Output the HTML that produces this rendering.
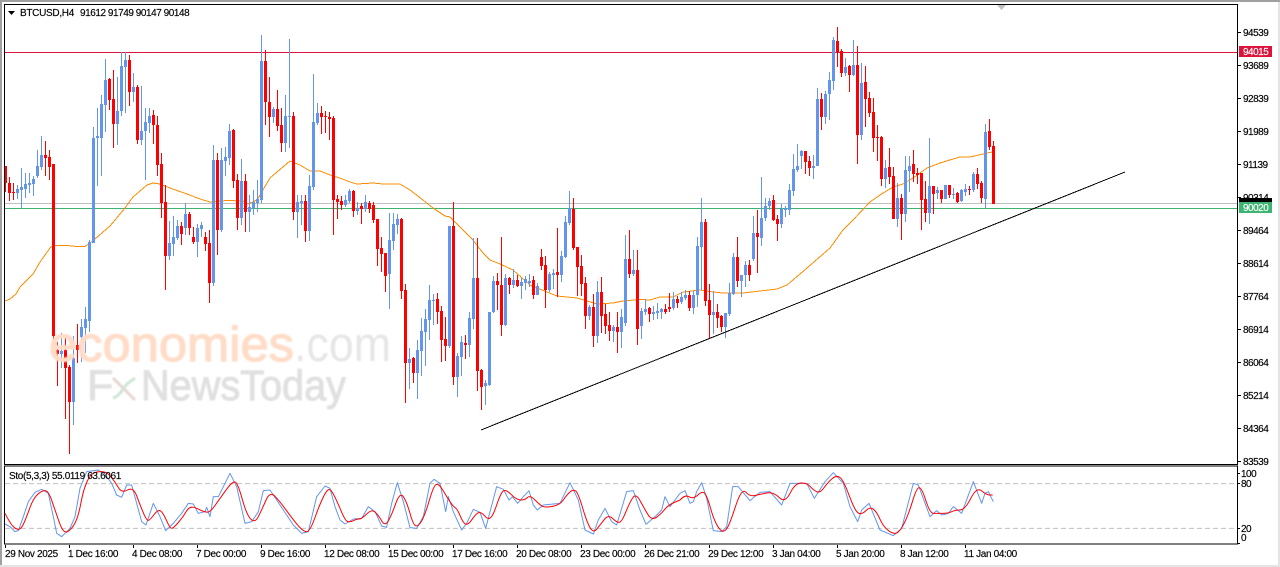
<!DOCTYPE html>
<html><head><meta charset="utf-8"><title>BTCUSD,H4</title>
<style>
html,body{margin:0;padding:0;background:#fff;width:1280px;height:567px;overflow:hidden}
svg{display:block}
text{font-family:"Liberation Sans",sans-serif;font-size:10px;fill:#000;letter-spacing:-.5px;stroke:#000;stroke-width:.15px}
.d text,text.d{letter-spacing:-.35px}
.w{stroke:none;letter-spacing:0}
.c{shape-rendering:crispEdges}
</style></head><body>
<svg width="1280" height="567" viewBox="0 0 1280 567" xmlns="http://www.w3.org/2000/svg">
<defs><filter id="bl" x="-5%" y="-5%" width="110%" height="110%"><feGaussianBlur stdDeviation=".7"/></filter></defs>
<rect width="1280" height="567" fill="#fff"/>
<g class="c">
<rect x="0" y="0" width="1280" height="2" fill="#a0a0a0"/>
<rect x="0" y="0" width="2" height="567" fill="#a0a0a0"/>
<rect x="0" y="565" width="1280" height="2" fill="#e4e4e4"/>
<rect x="1278" y="0" width="2" height="567" fill="#e4e4e4"/>
<rect x="1278" y="0" width="2" height="2" fill="#a0a0a0"/>
<rect x="1239" y="46" width="33" height="11" fill="#dc143c"/>
<rect x="4" y="52" width="1233" height="1" fill="#dc143c"/>
<rect x="4" y="203" width="1233" height="1" fill="#c0c0c0"/>
<rect x="4" y="208" width="1233" height="1" fill="#3cb371"/>
</g>
<polyline class="c" fill="none" stroke="#ff8c00" stroke-width="1" points="5,301 10,299 16,294 20,287 25,282 33,274 40,262 45,255 50,248 53,245.500 67,245.500 77,246.500 85,246.500 90,243 95,239 110,226 115,220 125,208 133,197 147,185 153,183 160,184 170,188 187,194 200,199 210,202 227,200.500 243,201 248,204 257,200 270,178 290,161 300,165 310,171 320,171 333,176 340,178 350,182 357,184 373,183 383,184 400,184 410,190 423,200 433,208 445,216 450,217 460,227 473,240 483,253 490,260 500,264 513,270 530,285 547,292 557,296 577,298 597,304 613,303 623,301 640,299.500 650,300 660,297 673,297 683,292 700,290 713,292 723,293 743,293 760,291 777,289 787,285 807,268 830,248 843,230 853,220 870,202 880,195 893,187 903,184 913,178 927,168 940,163 960,157 970,157 983,154 992,152"/>
<path id="wr" class="c" fill="none" stroke="#f00" stroke-width="1"/>
<path id="wb" class="c" fill="none" stroke="#6495ed" stroke-width="1"/>
<path id="br" class="c" fill="#f00"/>
<path id="bb" class="c" fill="#6495ed"/>
<line x1="481" y1="430" x2="1125" y2="172" stroke="#000" stroke-width="1" class="c"/>
<polygon points="997,5 1006,5 1001.500,10" fill="#c0c0c0"/>
<polygon points="8,11 15,11 11.500,15" fill="#000"/>
<rect class="c" x="4" y="4" width="1233" height="460" fill="none" stroke="#000" stroke-width="1" transform="translate(.5 .5)"/>
<rect class="c" x="4" y="466" width="1233" height="78" fill="none" stroke="#000" stroke-width="1" transform="translate(.5 0)"/>
<g transform="translate(0 460) scale(.33333)" fill="none" stroke-width="3" stroke-linejoin="round">
<polyline stroke="#c0c0c0" stroke-dasharray="15 9" points="15,71 3711,71"/>
<polyline stroke="#c0c0c0" stroke-dasharray="15 9" points="15,205 3711,205"/>
<g transform="translate(0 0)">
<polyline stroke="#6495ed" points="15,192 30,200 45,215 55,212 70,170 85,125 105,97 125,88 145,100 160,170 170,220 185,230 210,205 225,170 240,85 260,35 295,30 320,50 335,70 350,105 365,112 380,75 395,75 410,130 425,185 438,195 460,130 480,170 497,212 520,190 545,160 565,130 580,132 595,160 615,155 620,142 630,170 640,110 655,110 690,40 710,80 735,190 755,185 775,155 790,92 810,90 830,120 850,150 880,195 905,220 925,215 950,110 975,78 990,85 1005,140 1020,180"/>
<polyline class="s" stroke="#f00" points="15,160 30,190 50,210 65,205 80,170 100,115 125,92 145,92 165,150 190,222 215,208 235,170 250,90 270,45 290,35 320,35 345,65 365,100 400,80 420,135 440,182 450,180 475,147 490,160 510,205 520,205 550,170 570,135 610,155 630,158 660,115 700,60 715,75 740,165 765,190 785,150 810,93 840,125 880,180 910,215 930,215 960,130 985,82 1000,100 1020,145"/>
</g>
<g transform="translate(1020 0)">
<polyline stroke="#6495ed" points="0,180 15,192 40,177 65,175 85,140 105,155 125,198 140,202 155,130 172,68 190,125 210,203 230,205 250,170 270,70 282,58 300,70 317,155 325,110 340,155 365,210 380,190 400,148 420,157 437,205 470,80 490,88 507,120 517,110 533,130 550,110 567,92 580,135 592,150 610,135 660,130 690,68 715,120 735,210 760,222 775,180 795,145 815,185 830,195 860,95 880,92 900,150 918,193 945,170 965,150 975,110 990,140 1020,100"/>
<polyline class="s" stroke="#f00" points="0,145 15,182 30,187 50,177 65,177 95,147 115,165 135,200 155,165 180,95 200,125 220,195 235,200 255,165 280,80 295,68 320,110 340,140 352,147 370,190 385,195 410,158 425,157 445,180 460,165 480,105 495,85 530,120 555,120 570,105 600,135 615,143 660,135 680,105 700,87 715,100 740,185 760,220 780,195 805,163 830,187 845,187 870,125 888,100 910,140 935,183 965,160 985,135 1020,120"/>
</g>
<g transform="translate(2040 0)">
<polyline stroke="#6495ed" points="0,100 15,92 30,130 40,125 50,95 65,68 80,115 100,212 125,215 140,200 158,80 175,80 210,122 240,97 270,95 305,135 330,70 380,70 403,115 435,65 460,38 490,70 510,140 533,185 545,150 567,130 600,210 640,227 665,205 700,70 715,75 750,170 770,152 785,165 805,160 820,140 845,160 880,65 905,130 915,100 925,95 940,125"/>
<polyline class="s" stroke="#f00" points="0,120 15,103 40,118 70,90 85,120 100,175 120,212 135,215 150,190 185,83 210,110 240,103 280,95 315,130 345,70 380,68 400,90 420,100 445,65 470,45 490,60 520,140 535,162 550,160 570,140 590,155 610,200 640,223 660,215 685,165 710,83 725,83 750,160 770,160 805,160 825,150 855,150 890,80 920,105 938,105"/>
</g>
</g>
<g class="c" stroke="#000" stroke-width="1">
<path d="M1238 32.500h3M1238 65.500h3M1238 98.500h3M1238 131.500h3M1238 164.500h3M1238 197.500h3M1238 230.500h3M1238 263.500h3M1238 296.500h3M1238 329.500h3M1238 362.500h3M1238 395.500h3M1238 428.500h3M1238 461.500h3M1238 473.500h2M1238 483.500h2M1238 528.500h2M1238 543.500h2"/>
<path d="M5.500 545v3M69.500 545v3M133.500 545v3M197.500 545v3M261.500 545v3M325.500 545v3M389.500 545v3M453.500 545v3M517.500 545v3M581.500 545v3M645.500 545v3M709.500 545v3M773.500 545v3M837.500 545v3M901.500 545v3M965.500 545v3"/>
</g>
<text x="20" y="16" style="letter-spacing:-.3px">BTCUSD,H4</text>
<text x="80" y="16" style="letter-spacing:-.45px">91612 91749 90147 90148</text>
<text x="9" y="479" class="d">Sto(5,3,3) 55.0119 63.6061</text>
<g>
<text x="1243" y="36">94539</text>
<text x="1243" y="69">93689</text>
<text x="1243" y="102">92839</text>
<text x="1243" y="135">91989</text>
<text x="1243" y="168">91139</text>
<text x="1243" y="201">90314</text>
<text x="1243" y="234">89464</text>
<text x="1243" y="267">88614</text>
<text x="1243" y="300">87764</text>
<text x="1243" y="333">86914</text>
<text x="1243" y="366">86064</text>
<text x="1243" y="399">85214</text>
<text x="1243" y="432">84364</text>
<text x="1243" y="465">83539</text>
<text x="1241" y="477">100</text>
<text x="1241" y="487">80</text>
<text x="1241" y="532">20</text>
<text x="1241" y="541">0</text>
</g>
<rect class="c" x="1239" y="198" width="33" height="4" fill="#000"/>
<rect class="c" x="1239" y="202" width="33" height="11" fill="#3cb371"/>
<text x="1243" y="55" style="fill:#fff;stroke:#fff">94015</text>
<text x="1243" y="211" style="fill:#fff;stroke:#fff">90020</text>
<g class="d">
<text x="5" y="557">29 Nov 2025</text>
<text x="68" y="557">1 Dec 16:00</text>
<text x="132" y="557">4 Dec 08:00</text>
<text x="196" y="557">7 Dec 00:00</text>
<text x="260" y="557">9 Dec 16:00</text>
<text x="324" y="557">12 Dec 08:00</text>
<text x="388" y="557">15 Dec 00:00</text>
<text x="452" y="557">17 Dec 16:00</text>
<text x="516" y="557">20 Dec 08:00</text>
<text x="580" y="557">23 Dec 00:00</text>
<text x="644" y="557">26 Dec 21:00</text>
<text x="708" y="557">29 Dec 12:00</text>
<text x="772" y="557">3 Jan 04:00</text>
<text x="836" y="557">5 Jan 20:00</text>
<text x="900" y="557">8 Jan 12:00</text>
<text x="964" y="557">11 Jan 04:00</text>
</g>
<g filter="url(#bl)">
<text class="w" x="49" y="361" textLength="245" lengthAdjust="spacingAndGlyphs" style="font-size:49px;fill:#ffdcc7;stroke:#ffdcc7;stroke-width:1.2px">economies</text>
<text class="w" x="294" y="361" textLength="97" lengthAdjust="spacingAndGlyphs" style="font-size:49px;fill:#e6e6e6;stroke:none">.com</text>
<text class="w" x="87" y="400" style="font-size:43px;fill:#e0e0e0;stroke:#e0e0e0;stroke-width:1px">F</text>
<text class="w" x="141" y="400" textLength="205" lengthAdjust="spacingAndGlyphs" style="font-size:43px;fill:#e0e0e0;stroke:#e0e0e0;stroke-width:1px">NewsToday</text>
<path d="M113 378l22 22" stroke="#e8d6d0" stroke-width="3" fill="none"/>
<path d="M113 398c7-2 10-10 14-14 3-3 6-4 8-6" stroke="#cfe5d4" stroke-width="3" fill="none"/>
</g>
</svg>
<script>
var d="r166,183,166,192;r183,193,177,201;r192,193,183,200;b189,193,185,199;b187,190,168,208;b184,189,173,198;b183,185,173,193;b179,184,176,196;b166,176,150,178;b155,167,136,170;r155,158,141,176;r157,167,150,180;r164,336,164,340;r350,354,342,386;b351,354,333,368;r350,368,336,419;r367,402,365,454;b358,402,336,425;r345,350,324,363;b327,337,319,362;b319,328,307,353;b242,321,240,332;b138,243,127,243;b136,138,108,186;b104,138,95,176;b80,105,59,132;r79,100,78,110;r99,124,70,148;b111,124,77,145;b66,111,52,116;b60,67,52,113;r60,92,55,106;b87,92,73,102;r87,140,85,144;b131,140,86,145;b122,131,108,180;b116,123,108,133;r115,125,110,144;r125,165,116,176;r164,203,153,218;r202,256,185,290;b243,256,221,260;b237,244,216,256;b226,238,220,240;r226,234,222,245;b214,228,203,235;r214,228,212,235;r237,242,227,244;b228,242,224,257;b225,229,222,237;r237,244,232,251;r243,283,230,303;b160,283,145,286;r160,230,153,255;b160,230,148,232;b157,161,147,176;b131,158,124,165;r130,181,129,188;r180,218,174,230;b181,218,159,225;r181,212,174,232;b207,212,195,232;b202,208,190,215;b199,203,180,212;b61,200,35,203;r61,102,50,125;r102,117,77,137;b109,117,107,123;r109,126,90,131;r125,143,108,152;b116,143,95,152;b116,117,39,148;r116,212,112,220;b202,212,195,238;b201,203,195,225;r201,231,195,242;b186,231,175,241;b122,187,74,190;b113,123,103,125;r113,117,106,134;r116,117,111,133;r117,119,112,140;r118,200,116,235;r199,202,195,219;r201,205,196,210;b200,205,195,207;b191,201,189,203;r191,211,190,217;b208,211,202,215;r206,209,203,224;b202,209,195,212;r203,209,201,213;r205,220,202,223;r219,249,219,266;r248,254,237,272;r253,276,253,292;b240,274,213,309;b224,241,213,250;b219,225,214,234;r219,291,218,299;r290,363,284,403;b359,363,348,389;r358,373,357,383;b350,373,340,399;b331,351,318,376;b319,332,309,366;b300,320,285,340;b300,301,294,325;r299,312,293,324;r311,340,306,362;r339,346,317,361;b226,346,226,348;r226,377,202,385;b356,377,353,397;b342,357,336,376;r343,345,335,359;b318,345,312,357;b278,319,238,329;r278,371,238,391;r370,387,369,410;b383,386,380,405;b312,385,312,386;b281,312,276,313;r281,285,273,310;r285,325,237,336;b278,325,274,326;r278,285,277,294;b280,285,269,288;r280,286,275,287;b282,286,278,299;b279,283,276,290;b281,283,274,287;r280,295,276,299;b286,295,283,295;r257,266,249,270;r265,290,256,308;b274,290,272,292;b273,275,269,289;r272,275,228,297;b256,275,251,282;b222,257,216,258;b208,223,191,225;r209,248,198,250;r247,267,247,296;r266,284,255,296;r283,316,277,329;b307,316,305,320;r307,336,294,347;b292,336,281,343;r292,316,277,333;r314,326,304,334;r325,331,312,341;b327,331,325,342;r327,332,312,353;b317,332,309,348;b259,323,235,326;r259,274,230,278;b270,274,250,276;r270,329,250,345;b311,326,308,339;b309,312,299,315;r308,314,307,322;b312,314,306,320;b311,313,303,319;b309,312,308,319;r309,312,304,314;r307,309,293,312;b299,308,292,310;r299,303,296,308;b297,302,292,304;b295,298,290,300;r295,308,291,311;b295,308,291,314;b246,295,237,307;b222,247,198,290;r222,301,219,306;r300,315,284,339;b312,315,291,334;r312,318,304,328;r316,327,315,332;b313,327,313,338;b293,314,283,316;b257,294,253,295;r257,281,237,287;b275,281,275,297;b265,275,261,287;r265,275,260,281;b233,259,216,261;r233,237,210,273;b218,238,177,246;b206,218,198,221;b201,206,198,210;r200,220,195,221;r219,224,215,241;b209,224,204,228;b208,210,206,217;b190,210,184,215;b169,191,154,196;b166,170,144,172;b151,156,150,169;r151,162,151,174;r161,168,156,176;b166,168,155,179;b99,166,88,166;r99,117,93,130;b94,117,91,124;b80,94,72,120;b40,81,37,90;r41,52,27,67;r51,73,49,77;b67,73,58,76;r66,75,65,92;b65,75,40,76;r65,135,46,164;b83,135,63,140;r82,99,66,127;r98,113,92,117;r112,138,98,152;r137,138,125,161;r137,179,136,186;b168,179,160,188;r167,177,148,184;r176,219,167,219;b198,219,183,227;r198,214,194,240;b170,214,156,222;b166,171,156,192;r164,174,150,182;r173,175,168,184;r173,200,173,230;r199,213,181,222;b186,213,138,224;r186,194,186,214;b190,193,187,199;r190,199,190,203;b185,199,185,199;r185,195,185,198;b194,195,188,199;r193,202,192,203;b190,201,189,202;b189,192,184,196;r189,190,186,195;b174,190,172,192;r174,184,168,189;r183,198,181,203;b132,199,124,208;r131,147,119,150;r146,204,141,204".split(";");
var p={wr:"",wb:"",br:"",bb:""};
d.forEach(function(s,i){var c=s.charAt(0),v=s.slice(1).split(",").map(Number),x=5+4*i;
p["w"+c]+="M"+(x+.5)+" "+v[2]+"V"+v[3];
p["b"+c]+="M"+(x-1)+" "+v[0]+"H"+(x+2)+"V"+v[1]+"H"+(x-1)+"Z";});
for(var k in p)document.getElementById(k).setAttribute("d",p[k]);
Array.prototype.forEach.call(document.querySelectorAll("polyline.s"),function(l){
var a=l.getAttribute("points").trim().split(/\s+/).map(function(q){return q.split(",").map(Number)});
var s="M"+a[0][0]+" "+a[0][1];
for(var i=1;i<a.length-1;i++){var mx=(a[i][0]+a[i+1][0])/2,my=(a[i][1]+a[i+1][1])/2;s+="Q"+a[i][0]+" "+a[i][1]+" "+mx+" "+my;}
s+="L"+a[a.length-1][0]+" "+a[a.length-1][1];
var n=document.createElementNS("http://www.w3.org/2000/svg","path");
n.setAttribute("d",s);n.setAttribute("stroke","#f00");n.setAttribute("fill","none");
l.parentNode.replaceChild(n,l);});
</script>
</body></html>
